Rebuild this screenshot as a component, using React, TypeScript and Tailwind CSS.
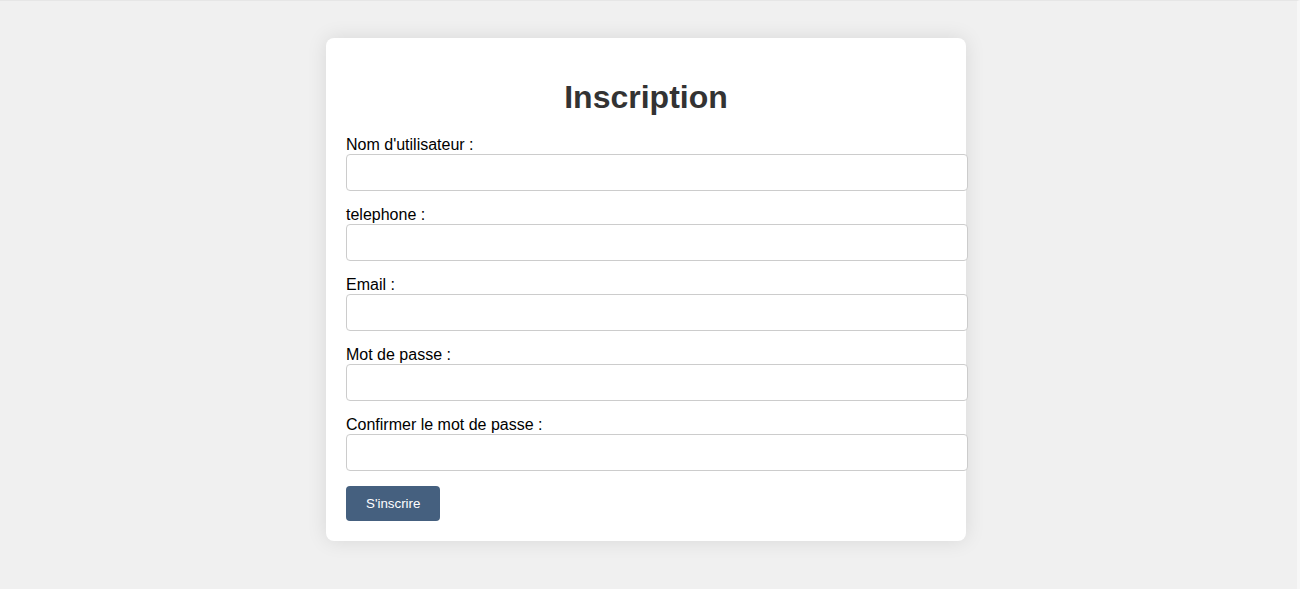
export default function App() {
  return (
    <div className="min-h-[589px] bg-[#f0f0f0] border-t border-[#e6e6e6] border-r-[3px] border-r-[#f7f7f7] flex justify-center pr-[5px] pt-[37px] font-['Liberation_Sans',Arial,sans-serif]">
      <div className="w-[640px] self-start bg-white rounded-lg shadow-[0_0_20px_rgba(0,0,0,0.1)] px-[20px] pt-[20px] pb-[20px]">
        <h1 className="mt-[21px] mb-[20px] text-center text-[32px] leading-[37px] font-bold text-[#333]">
          Inscription
        </h1>
        <form>
          {["Nom d'utilisateur :", 'telephone :', 'Email :', 'Mot de passe :', 'Confirmer le mot de passe :'].map(
            (label, i) => (
              <div key={i} className="mb-[15px]">
                <label className="block text-[16px] leading-[18px] text-black">{label}</label>
                <input
                  type={i >= 3 ? 'password' : 'text'}
                  className="block w-[622px] h-[37px] border border-[#ccc] rounded-[4px] px-[10px] bg-white outline-none"
                />
              </div>
            ),
          )}
          <button
            type="button"
            className="h-[35px] px-[20px] bg-[#45607f] text-white text-[13.33px] rounded-[4px]"
          >
            S'inscrire
          </button>
        </form>
      </div>
    </div>
  )
}
